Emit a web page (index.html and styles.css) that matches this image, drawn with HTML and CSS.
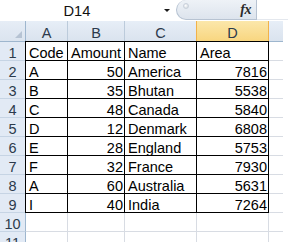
FILE: index.html
```html
<!DOCTYPE html>
<html>
<head>
<meta charset="utf-8">
<link rel="stylesheet" href="styles.css">
</head>
<body>
<div class="app">
  <div class="fbar">
    <div class="namebox">D14</div>
    <div class="nb-drop"><span class="arrow"></span></div>
    <div class="fxbox"><span class="knob"></span><span class="fx">fx</span></div>
    <div class="input"></div>
  </div>
  <div class="sheet">
    <div class="grid">
      <div class="corner"><svg width="26" height="21" viewBox="0 0 26 21"><polygon points="15,17 22,17 22,10" fill="#b6c3d3"/></svg></div>
      <div class="h">A</div><div class="h">B</div><div class="h">C</div><div class="h sel">D</div><div class="h last"></div>

      <div class="rh">1</div><div class="t a top">Code</div><div class="t top">Amount</div><div class="t top">Name</div><div class="t top">Area</div><div class="c"></div>
      <div class="rh">2</div><div class="t a">A</div><div class="t n">50</div><div class="t">America</div><div class="t n">7816</div><div class="c"></div>
      <div class="rh">3</div><div class="t a">B</div><div class="t n">35</div><div class="t">Bhutan</div><div class="t n">5538</div><div class="c"></div>
      <div class="rh">4</div><div class="t a">C</div><div class="t n">48</div><div class="t">Canada</div><div class="t n">5840</div><div class="c"></div>
      <div class="rh">5</div><div class="t a">D</div><div class="t n">12</div><div class="t">Denmark</div><div class="t n">6808</div><div class="c"></div>
      <div class="rh">6</div><div class="t a">E</div><div class="t n">28</div><div class="t">England</div><div class="t n">5753</div><div class="c"></div>
      <div class="rh">7</div><div class="t a">F</div><div class="t n">32</div><div class="t">France</div><div class="t n">7930</div><div class="c"></div>
      <div class="rh">8</div><div class="t a">A</div><div class="t n">60</div><div class="t">Australia</div><div class="t n">5631</div><div class="c"></div>
      <div class="rh">9</div><div class="t a">I</div><div class="t n">40</div><div class="t">India</div><div class="t n">7264</div><div class="c"></div>
      <div class="rh">10</div><div class="c"></div><div class="c"></div><div class="c"></div><div class="c"></div><div class="c"></div>
      <div class="rh">11</div><div class="c"></div><div class="c"></div><div class="c"></div><div class="c"></div><div class="c"></div>
    </div>
  </div>
</div>
</body>
</html>
```

FILE: styles.css
```css
* { box-sizing: border-box; margin: 0; padding: 0; }
html, body { background: #fff; }
body {
  width: 288px;
  height: 252px;
  overflow: hidden;
  font-family: "Liberation Sans", Arial, sans-serif;
  font-size: 14.5px;
  color: #000;
}
.app { width: 288px; }

.fbar {
  display: flex;
  height: 21px;
  background: #fff;
}
.namebox {
  width: 154px;
  height: 20px;
  text-align: center;
  font-size: 14.7px;
  line-height: 18px;
  padding-top: 2px;
  color: #111;
}
.nb-drop {
  width: 22px;
  height: 20px;
  padding-left: 10px;
  padding-top: 9px;
}
.arrow {
  display: block;
  width: 0;
  height: 0;
  border-left: 3px solid transparent;
  border-right: 3px solid transparent;
  border-top: 3px solid #1a1a1a;
}
.fxbox {
  position: relative;
  width: 81px;
  height: 20px;
  background: linear-gradient(#eef2f7, #dde4ed);
  border: 1px solid #b7c3d2;
  border-top: none;
  border-radius: 0 0 0 10px / 0 0 0 10px;
  border-top-left-radius: 10px;
  display: flex;
  align-items: center;
  justify-content: flex-end;
  padding-right: 5px;
}
.knob {
  position: absolute;
  left: 6px;
  top: 3px;
  width: 6px;
  height: 6px;
  border-radius: 50%;
  background: radial-gradient(circle at 40% 40%, #ffffff, #c8d0da);
  border: 1px solid #c9d1db;
}
.fx {
  font-family: "Liberation Serif", "Times New Roman", serif;
  font-style: italic;
  font-weight: bold;
  font-size: 14px;
  color: #2a2a2a;
  line-height: 14px;
  letter-spacing: -0.5px;
  margin-top: 1px;
}
.input {
  flex: 1;
  height: 20px;
  border-bottom: 1px solid #e4e8ee;
}

.sheet {
  width: 288px;
  height: 221px;
  overflow: hidden;
}
.grid {
  display: grid;
  grid-template-columns: 26px 42px 57px 72px 72px 14px;
  grid-template-rows: 21px repeat(11, 19px);
}
.grid > div {
  overflow: hidden;
  white-space: nowrap;
}

.corner {
  background: linear-gradient(#e6edf6, #dbe4ef);
  border-right: 1px solid #9eb6ce;
  border-bottom: 1px solid #9eb6ce;
}
.corner svg { display: block; }

.h {
  background: linear-gradient(#e7eef7, #dae3ee);
  border-right: 1px solid #bccbdb;
  border-bottom: 1px solid #9eb6ce;
  text-align: center;
  line-height: 18px;
  padding-top: 3px;
  color: #2c3a4c;
}
.h.sel {
  background: linear-gradient(#fbe7ab, #f8d680);
  border-left: 1px solid #f1b24a;
  border-right: 1px solid #f1b24a;
  border-bottom: 1px solid #f29436;
  margin-left: -1px;
}
.h.last { border-right: none; }

.rh {
  background: #e2eaf5;
  border-right: 1px solid #9eb6ce;
  border-bottom: 1px solid #c6d4e4;
  text-align: center;
  line-height: 18px;
  padding-top: 2px;
  color: #2c3a4c;
}

.c {
  border-right: 1px solid #d8dce3;
  border-bottom: 1px solid #d8dce3;
}
.grid > .c:nth-child(6n) { border-right: none; }

.t {
  border-right: 1px solid #000;
  border-bottom: 1px solid #000;
  line-height: 18px;
  padding-top: 2px;
  padding-left: 3px;
  padding-right: 1px;
}
.t.n { text-align: right; }
.t.a { box-shadow: -1px 0 0 #000; }
.t.top { box-shadow: 0 -1px 0 #000; }
.t.a.top { box-shadow: -1px 0 0 #000, 0 -1px 0 #000, -1px -1px 0 #000; }
```
